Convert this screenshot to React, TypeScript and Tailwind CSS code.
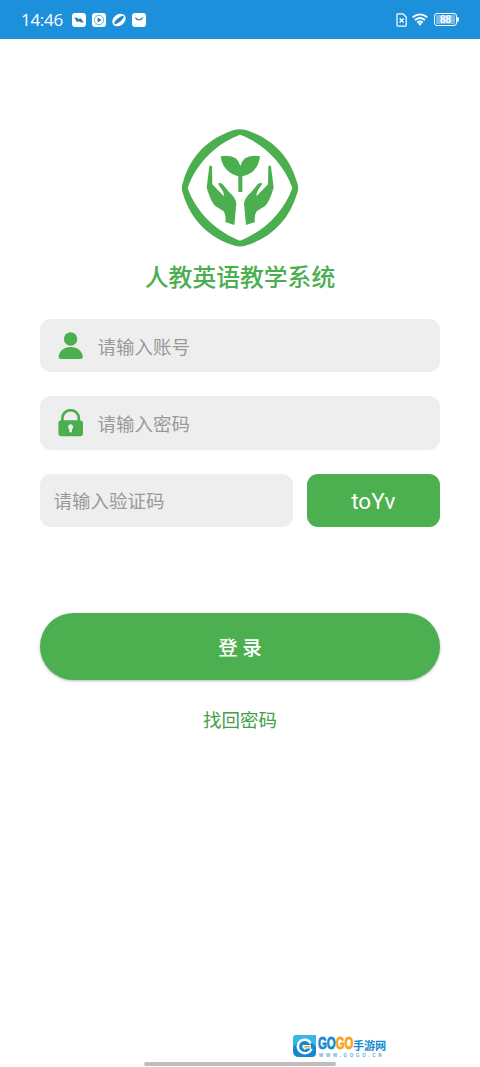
const StatusBar = () => (
  <header className="flex h-[39px] items-center justify-between bg-[#1c90da] pr-[21px] pl-[21px] text-white">
    <div className="flex items-center">
      <span className="w-[51px] font-['Open_Sans','Noto_Sans',sans-serif] text-[17px] leading-5 tracking-[-0.3px] whitespace-nowrap">
        14:46
      </span>
      <div className="flex gap-[6px]">
        <svg className="h-[14px] w-[14px]" viewBox="0 0 14 14">
          <rect width="14" height="14" rx="3" fill="#fff" />
          <path d="M2.2 4.2l3 .8 1.8 1 1.8-.8 3 4.6-3-.6-2-1-2 .8z" fill="#1c80c0" />
        </svg>
        <svg className="h-[14px] w-[14px]" viewBox="0 0 14 14">
          <rect width="14" height="14" rx="3" fill="#fff" />
          <circle cx="7" cy="7" r="4.7" fill="none" stroke="#6bb4df" strokeWidth="1" />
          <path d="M5.6 4.6L9.7 7l-4.1 2.4z" fill="#1c80c0" />
        </svg>
        <svg className="h-[14px] w-[14px]" viewBox="0 0 14 14">
          <ellipse cx="7" cy="7" rx="7.3" ry="5.6" transform="rotate(-40 7 7)" fill="#fff" />
          <ellipse cx="7" cy="7" rx="6" ry="2" transform="rotate(-40 7 7)" fill="#2485c6" />
        </svg>
        <svg className="h-[14px] w-[14px]" viewBox="0 0 14 14">
          <rect width="14" height="14" rx="3" fill="#fff" />
          <path d="M3.4 4.5c1.4 3.2 5.8 3.2 7.2 0" fill="none" stroke="#377d9d" strokeWidth="1.3" />
        </svg>
      </div>
    </div>
    <div className="flex items-center">
      <svg className="mr-[5px] h-[14px] w-[11px]" viewBox="0 0 11 14" fill="none" stroke="#fff">
        <path d="M1 1.5Q1 .8 1.8.8H7L10.2 4v8.2q0 1-1 1H2q-1 0-1-1z" strokeWidth="1.2" />
        <path d="M3.6 5.5l4 4M7.6 5.5l-4 4" strokeWidth="1.4" />
      </svg>
      <svg className="mr-[6px] h-[13px] w-[16px]" viewBox="0 0 16 13" fill="none" stroke="#fff">
        <path d="M.7 4.3q7.3-5.9 14.6 0M3 7q5-4 10 0M5.2 9.5q2.8-2 5.6 0" strokeWidth="1.8" />
        <path d="M6 10.5q2-1.3 4 0l-2 2.3z" fill="#fff" stroke="none" />
      </svg>
      <div className="flex h-[13px] w-[23px] items-center justify-center rounded-[3px] border border-white p-px">
        <span className="flex h-[9px] w-full items-center justify-center rounded-[1px] bg-white/40 font-['Liberation_Sans',sans-serif] text-[10px] leading-none font-bold">
          88
        </span>
      </div>
      <span className="h-[5px] w-[2px] rounded-r-sm bg-white" />
    </div>
  </header>
);

const Logo = () => (
  <svg className="h-[118px] w-[118px]" viewBox="33 27 354 354" fill="#4bae4f">
    <path
      fillRule="evenodd"
      d="M190 31Q210 24 230 31C303 55 357 104 381 187Q388 204 381 221C357 301 303 352 230 376Q210 383 190 376C117 352 63 301 39 221Q32 204 39 187C63 104 117 55 190 31ZM210 44C145 68 80 125 53 204C80 282 145 337 210 362C275 337 340 282 367 204C340 125 275 68 210 44Z"
    />
    <path d="M152 109Q203 101 211 138Q220 101 270 109Q265 158 217 169V216H205V169Q158 156 152 109Z" />
    <path
      id="hand"
      d="M118 139Q120 134 126 139L127 193L161 228Q163 223 157 211L144 191Q150 186 158 193L177 216Q197 233 199 251L193 315L166 306Q169 286 161 274L137 259Q124 249 110 203Z"
    />
    <use href="#hand" transform="matrix(-1 0 0 1 421 0)" />
  </svg>
);

const UserIcon = () => (
  <svg className="h-[28px] w-[26px]" viewBox="0 0 26 28" fill="#4bae4f">
    <circle cx="12.6" cy="7" r="6.7" />
    <path d="M.6 24.8C2 11.8 23.4 11.8 24.8 24.8Q24.8 27 22.6 27H2.8Q.6 27 .6 24.8Z" />
  </svg>
);

const LockIcon = () => (
  <svg className="h-[28px] w-[26px]" viewBox="0 0 26 28">
    <path d="M4.4 13V9.3a8.2 8.2 0 0 1 16.4 0V13" fill="none" stroke="#4bae4f" strokeWidth="2.6" />
    <rect x=".4" y="11.2" width="24.6" height="16" rx="3.2" fill="#4bae4f" />
    <path d="M12.6 15.3a2.7 2.7 0 0 1 1.4 4.9v2q0 1.3-1.4 1.3t-1.4-1.3v-2a2.7 2.7 0 0 1 1.4-4.9z" fill="#eee" />
  </svg>
);

const inputClass =
  "min-w-0 flex-1 bg-transparent text-[18.5px] leading-6 text-[#999] outline-none placeholder:text-[#999] placeholder:opacity-100";

const Watermark = () => (
  <div className="absolute top-[1035px] left-[293px] flex h-[23px] w-[94px] items-start">
    <svg className="h-[23px] w-[23px] shrink-0" viewBox="0 0 23 23">
      <path d="M4 0H23V18Q23 22 19 22H6Q0 22 0 16V4Q0 0 4 0Z" fill="#1687d2" />
      <path d="M4 0H23V12Q13-1 0 12V4Q0 0 4 0Z" fill="#35b8e8" />
      <path
        d="M17.6 8.4C15.4 3.8 9 3.6 6.2 7.4s-1.2 9 3.4 10.4c4 1.2 7.6-.6 9-4"
        fill="none"
        stroke="#fff"
        strokeWidth="2.4"
      />
      <path d="M9.5 10h8.5v3.4h-4.4l-2 1.6-.8-1.6H9.5z" fill="#fff" />
      <path d="M11 11h6.4v1.5H13.2l-1 .9z" fill="#f0a52a" />
    </svg>
    <div className="ml-[2px] flex w-[69px] flex-col">
      <div className="flex h-[18px] items-start whitespace-nowrap">
        <span className="block w-[35px] origin-left scale-x-[0.67] font-['Liberation_Sans',sans-serif] text-[17px] leading-[18px] font-bold text-[#188bd0] [-webkit-text-stroke:0.8px]">
          GO<span className="text-[#f9a51a]">GO</span>
        </span>
        <span className="text-[11.2px] leading-[20px] font-bold tracking-[-0.2px] text-[#188bd0]">手游网</span>
      </div>
      <span className="mt-px ml-px font-['Liberation_Sans',sans-serif] text-[4.5px] leading-[4px] font-bold tracking-[2.7px] whitespace-nowrap text-[#5babd7]">
        WWW.GOGO.CN
      </span>
    </div>
  </div>
);

const App = () => {
  return (
    <div className="relative flex h-[1067px] w-[480px] flex-col overflow-hidden bg-white font-['Noto_Sans_CJK_SC',sans-serif]">
      <StatusBar />

      <main className="flex flex-1 flex-col items-center px-10 pt-[90px]">
        <Logo />
        <h1 className="mt-[11px] text-[23.8px] leading-9 font-medium whitespace-nowrap text-[#4bae4f]">
          人教英语教学系统
        </h1>

        <form className="mt-[25px] flex w-full flex-col gap-6">
          <label className="flex h-[53.3px] items-center rounded-[11px] bg-[#eee] pr-4 pl-[18px]">
            <UserIcon />
            <input className={`${inputClass} ml-[13.5px]`} placeholder="请输入账号" />
          </label>
          <label className="flex h-[53.3px] items-center rounded-[11px] bg-[#eee] pr-4 pl-[18px]">
            <LockIcon />
            <input className={`${inputClass} ml-[13.5px]`} type="password" placeholder="请输入密码" />
          </label>
          <div className="flex h-[53.3px] justify-between">
            <label className="flex w-[253px] items-center rounded-[11px] bg-[#eee] px-[13.5px]">
              <input className={inputClass} placeholder="请输入验证码" />
            </label>
            <button
              type="button"
              className="w-[133.5px] rounded-[11px] bg-[#4caf50] pt-[3px] font-[Roboto,sans-serif] text-[22.5px] text-white"
            >
              toYv
            </button>
          </div>
          <button
            type="button"
            className="mt-[62.6px] h-[67px] w-full rounded-full bg-[#4caf50] text-[19.5px] font-medium text-white shadow-[0_1px_3px_rgba(0,0,0,0.28)]"
          >
            登 录
          </button>
        </form>

        <a href="#" className="mt-[25px] text-[18.5px] leading-7 text-[#43a047]">
          找回密码
        </a>
      </main>

      <div className="absolute top-[1062px] left-[144px] h-[4px] w-[192px] rounded-full bg-[#bebebe]" />
      <Watermark />
    </div>
  );
};

export default App;
